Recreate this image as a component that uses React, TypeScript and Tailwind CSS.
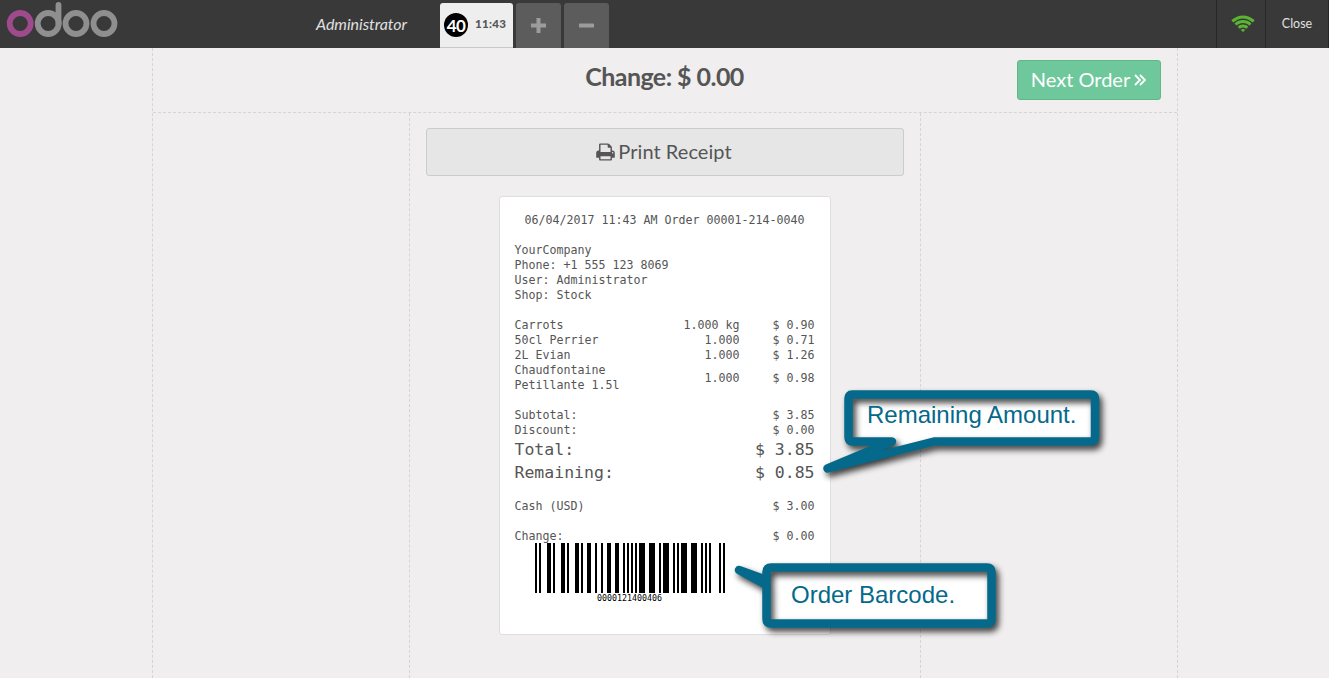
import React from "react";

const LATO = "font-['Lato',sans-serif]";
const MONO = "font-['DejaVu_Sans_Mono','Liberation_Mono',monospace]";

const lines = [
  { name: "Carrots", qty: "1.000 kg", price: "$ 0.90" },
  { name: "50cl Perrier", qty: "1.000", price: "$ 0.71" },
  { name: "2L Evian", qty: "1.000", price: "$ 1.26" },
  { name: "Chaudfontaine Petillante 1.5l", qty: "1.000", price: "$ 0.98" },
];

function Logo() {
  return (
    <svg width="112" height="40" viewBox="6 0 112 40" className="ml-[6px] block shrink-0" fill="none" strokeWidth="5.8">
      <circle cx="20.2" cy="23.5" r="10.5" stroke="#9f4a8c" />
      <g stroke="#8f8f8f">
        <circle cx="48.2" cy="23.5" r="10.5" />
        <path d="M58.500 24V4.8" strokeLinecap="round" />
        <circle cx="76" cy="23.5" r="10.5" />
        <circle cx="104" cy="23.5" r="10.5" />
      </g>
    </svg>
  );
}

function Header() {
  return (
    <header className="flex h-12 shrink-0 bg-[#393939] text-[#e0e0e0]">
      <Logo />
      <div className="ml-[198px] w-[124px] text-base leading-[48px] tracking-[-0.03px] italic">Administrator</div>
      <div className="flex items-start gap-[3px] pt-[3px]">
        <div className="flex h-[45px] w-[73px] items-center rounded-t-[3px] border-b border-[#c8c8c8] bg-[#eeeeee] pl-1">
          <span className="flex size-6 items-center justify-center rounded-full bg-black text-[17px] leading-none font-bold tracking-[-0.5px] text-white">40</span>
          <span className="-mt-[2px] ml-[7px] text-[11.5px] font-black tracking-[0.3px] text-[#555555]">11:43</span>
        </div>
        <div className="flex h-[45px] w-[45px] items-center justify-center rounded-t-[3px] bg-[#5c5c5c]">
          <svg width="15" height="15" viewBox="0 0 15 15" fill="#9c9c9c"><path d="M5.5 0h4v5.500h5.500v4h-5.500v5.500h-4v-5.500h-5.500v-4h5.500z" /></svg>
        </div>
        <div className="flex h-[45px] w-[45px] items-center justify-center rounded-t-[3px] bg-[#5c5c5c]">
          <svg width="15" height="15" viewBox="0 0 15 15" fill="#9c9c9c"><rect y="5.500" width="15" height="4" rx="0.500" /></svg>
        </div>
      </div>
      <div className="ml-auto flex">
        <div className="flex w-[49px] items-center justify-center border-l border-[#272727] pl-1">
          <svg width="24" height="21" viewBox="0 0 2048 1792" fill="#5bb532">
            <path d="M1024 1523q-20 0-93-73.500t-73-93.500q0-32 62.500-54t103.500-22 103.500 22 62.500 54q0 20-73 93.500t-93 73.500zM1294 1252q-2 0-40-25t-101.500-50-128.500-25-128.500 25-101 50-40.500 25q-18 0-93.500-75t-75.500-93q0-13 10-23 78-77 196-121t233-44 233 44 196 121q10 10 10 23 0 18-75.500 93t-93.500 75zM1567 981q-11 0-23-8-136-105-252-154.500t-268-49.500q-85 0-170.500 22t-149 53-113.500 62-79 53-31 22q-17 0-92-75t-75-93q0-12 10-22 132-132 320-205t380-73 380 73 320 205q10 10 10 22 0 18-75 93t-92 75zM1838 709q-11 0-22-9-179-157-371.500-236.500t-420.500-79.500-420.500 79.500-371.500 236.500q-11 9-22 9-17 0-92.500-75t-75.500-93q0-13 10-23 187-186 445-288t527-102 527 102 445 288q10 10 10 23 0 18-75.500 93t-92.500 75z" />
          </svg>
        </div>
        <div className="w-16 border-x border-[#272727] text-center text-[12.5px] leading-[47px]">Close</div>
      </div>
    </header>
  );
}

function Row({ label, value }: { label: string; value: string }) {
  return (
    <div className="flex justify-between">
      <span>{label}</span>
      <span>{value}</span>
    </div>
  );
}

// EAN-13 modules for 0000121400406
const MODULES =
  "101" + "0001101" + "0001101" + "0001101" + "0011001" + "0010011" + "0011001" +
  "01010" + "1011100" + "1110010" + "1110010" + "1011100" + "1110010" + "1010000" + "101";

function Barcode() {
  return (
    <div className="-mt-px ml-5 w-[190px] text-black">
      <svg width="190" height="50" viewBox="0 0 95 50" preserveAspectRatio="none" shapeRendering="crispEdges" className="block">
        {MODULES.split("").map((m, i) => (m === "1" ? <rect key={i} x={i} y="0" width="1" height="50" /> : null))}
      </svg>
      <div className="text-center text-[8.3px] leading-[10px]">0000121400406</div>
    </div>
  );
}

function Receipt() {
  return (
    <div className={`${MONO} mx-auto mt-5 h-[439px] w-[332px] rounded-[3px] border border-[#dedede] bg-white px-[15px] pt-4 text-[11.63px] leading-[15px] whitespace-pre text-[#555555]`}>
      <div className="text-center">06/04/2017 11:43 AM Order 00001-214-0040</div>
      <div className="mt-[15px]">
        <div>YourCompany</div>
        <div>Phone: +1 555 123 8069</div>
        <div>User: Administrator</div>
        <div>Shop: Stock</div>
      </div>
      <div className="mt-[15px]">
        {lines.map((l) => (
          <div key={l.name} className="flex items-center">
            <span className="w-[126px] whitespace-normal">{l.name}</span>
            <span className="w-[99px] text-right">{l.qty}</span>
            <span className="ml-auto">{l.price}</span>
          </div>
        ))}
      </div>
      <div className="mt-[15px]">
        <Row label="Subtotal:" value="$ 3.85" />
        <Row label="Discount:" value="$ 0.00" />
        <div className="text-[16.5px] leading-[23px]">
          <Row label="Total:" value="$ 3.85" />
          <Row label="Remaining:" value="$ 0.85" />
        </div>
      </div>
      <div className="mt-[15px]"><Row label="Cash (USD)" value="$ 3.00" /></div>
      <div className="mt-[15px]"><Row label="Change:" value="$ 0.00" /></div>
      <Barcode />
    </div>
  );
}

function Bubble({ d, label, className, viewBox, textClass }: { d: string; label: string; className: string; viewBox: string; textClass: string }) {
  return (
    <div className={`absolute ${className}`}>
      <svg viewBox={viewBox} className="absolute inset-0 size-full overflow-visible">
        <path d={d} fill="#ffffff" />
        <path d={d} fill="none" stroke="#04698a" strokeWidth="8.5" strokeLinejoin="round" className="drop-shadow-[3px_4px_3px_rgba(0,0,0,0.75)]" />
      </svg>
      <span className={`absolute font-['Liberation_Sans',sans-serif] text-2xl leading-7 whitespace-nowrap text-[#04698a] ${textClass}`}>{label}</span>
    </div>
  );
}

export default function App() {
  return (
    <div className={`${LATO} relative flex h-[678px] w-[1329px] flex-col overflow-hidden bg-[#f0eeee] text-[#555555]`}>
      <Header />
      <main className="mx-auto flex w-[1026px] grow flex-col border-x border-dashed border-[#d7d4d4]">
        <div className="grid h-[65px] shrink-0 grid-cols-[1fr_auto_1fr] items-start border-b border-dashed border-[#d7d4d4] pr-4">
          <span />
          <h1 className="pl-4 text-[25px] leading-[56px] font-bold tracking-[-0.55px]">Change: $ 0.00</h1>
          <button className="mt-3 flex h-10 w-36 items-center justify-center gap-1 justify-self-end rounded-[3px] border border-[#5fb888] bg-[#6ec89b] pb-[2px] text-xl text-white">
            Next Order
            <svg width="12" height="14" viewBox="0 0 12 14" fill="none" stroke="currentColor" strokeWidth="1.800" className="mt-[2px]"><path d="M1 2l5 5-5 5M6 2l5 5-5 5" /></svg>
          </button>
        </div>
        <div className="flex grow">
          <div className="w-64" />
          <section className="w-[512px] border-x border-dashed border-[#d7d4d4] px-4 pt-[15px]">
            <button className="flex h-12 w-[478px] items-center justify-center gap-[3px] rounded-[3px] border border-[#cccccc] bg-[#e6e6e6] pr-px pb-[2px] text-xl tracking-[0.05px]">
              <svg width="19" height="20" viewBox="0 0 1664 1792" fill="currentColor" className="mt-px">
                <path d="M384 1536h896v-256h-896v256zM384 896h896v-384h-160q-40 0-68-28t-28-68v-160h-640v640zM1536 960q0-26-19-45t-45-19-45 19-19 45 19 45 45 19 45-19 19-45zM1664 960v416q0 13-9.500 22.500t-22.500 9.500h-224v160q0 40-28 68t-68 28h-960q-40 0-68-28t-28-68v-160h-224q-13 0-22.500-9.500t-9.500-22.500v-416q0-79 56.500-135.500t135.500-56.500h64v-544q0-40 28-68t68-28h672q40 0 88 20t76 48l152 152q28 28 48 76t20 88v256h64q79 0 135.500 56.500t56.500 135.500z" />
              </svg>
              Print Receipt
            </button>
            <Receipt />
          </section>
        </div>
      </main>
      <Bubble
        label="Remaining Amount."
        viewBox="820 386 284 90"
        className="top-[386px] left-[820px] h-[90px] w-[284px]"
        textClass="left-[47px] top-[15px]"
        d="M852 394.500H1091Q1095 394.500 1095 398.500V437Q1095 441.500 1091 441.500H934L827.500 468.500L892 441.500H852Q848.500 441.500 848.500 437V398.500Q848.500 394.500 852 394.500Z"
      />
      <Bubble
        label="Order Barcode."
        viewBox="734 560 266 74"
        className="top-[560px] left-[734px] h-[74px] w-[266px]"
        textClass="left-[57px] top-[21px]"
        d="M771 567.500H987Q991.500 567.500 991.500 572V619Q991.500 623.500 987 623.500H771Q766.500 623.500 766.500 619V585L739 570L766.500 580V572Q766.500 567.500 771 567.500Z"
      />
    </div>
  );
}
